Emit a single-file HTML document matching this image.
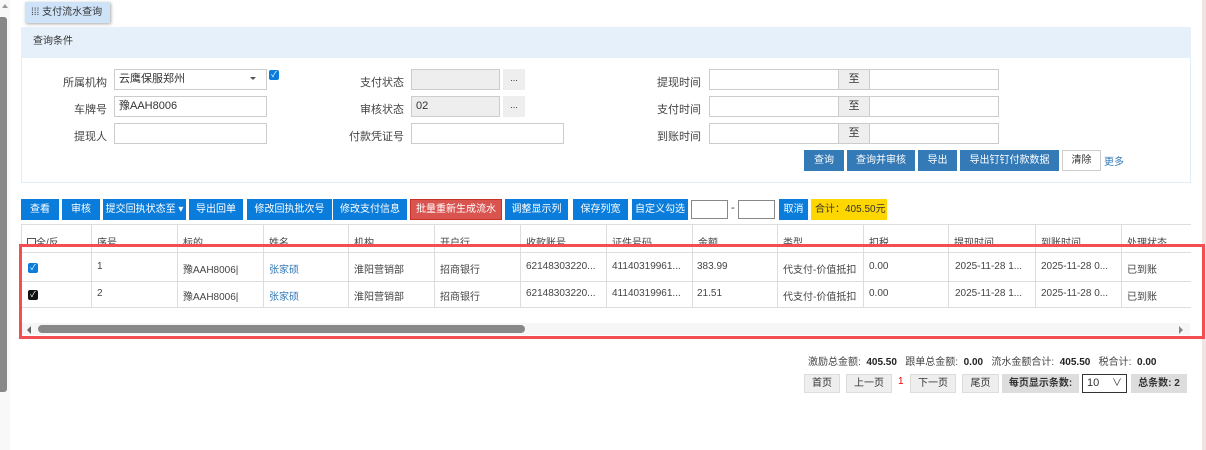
<!DOCTYPE html>
<html><head><meta charset="utf-8"><style>
*{box-sizing:border-box;margin:0;padding:0}
body{width:1206px;height:450px;overflow:hidden;background:#fff;font-family:"Liberation Sans","Noto Sans CJK SC",sans-serif;font-size:11px;color:#333;position:relative}
.a{position:absolute}
.lbl{position:absolute;text-align:right;font-size:11px;color:#444}
.inp{position:absolute;height:21px;border:1px solid #ccc;background:#fff;font-size:11px;padding:2px 4px;line-height:15px}
.dis{background:#eee}
.btn{position:absolute;top:199px;height:21px;background:#0a7ddc;color:#fff;font-size:10px;line-height:21px;text-align:center}
.qb{position:absolute;top:150px;height:21px;background:#337ab7;color:#fff;font-size:10px;line-height:21px;text-align:center}
.vl{position:absolute;top:224px;width:1px;height:84px;background:#ddd}
.hl{position:absolute;left:21px;width:1170px;height:1px;background:#ddd}
.c{position:absolute;font-size:10px;color:#444;white-space:nowrap}
.pb{position:absolute;top:374px;height:19px;background:#eee;border:1px solid #ddd;font-size:10px;line-height:17px;text-align:center;color:#333}
</style></head><body>
<div class="a" style="left:0;top:0;width:10px;height:450px;background:#f8f8f8"></div>
<div class="a" style="left:2px;top:4px;width:0;height:0;border-left:3px solid transparent;border-right:3px solid transparent;border-bottom:4px solid #999"></div>
<div class="a" style="left:0;top:17px;width:7px;height:375px;background:#888;border-radius:0 3px 3px 0"></div>
<div class="a" style="left:1202px;top:0;width:4px;height:450px;background:#f2e4e4"></div>

<div class="a" style="left:25px;top:2px;width:85px;height:21px;background:#cfe3f8;box-shadow:1px 1px 3px #aaa;font-size:10px;line-height:21px;padding-left:6px">&#8286;&#8286;&#8286; 支付流水查询</div>

<div class="a" style="left:21px;top:27px;width:1170px;height:156px;border:1px solid #e3edf7"></div>
<div class="a" style="left:21px;top:27px;width:1170px;height:31px;background:#e6f0fa;font-size:10px;line-height:30px;padding-left:12px">查询条件</div>

<div class="lbl" style="left:40px;top:74px;width:67px">所属机构</div>
<div class="inp" style="left:114px;top:69px;width:153px">云鹰保服郑州<span style="position:absolute;right:10px;top:7px;border-left:3px solid transparent;border-right:3px solid transparent;border-top:3px solid #555"></span></div>
<div class="a" style="left:269px;top:70px;width:10px;height:10px;background:#0a7ddc;border-radius:2px;color:#fff;font-size:8px;line-height:10px;text-align:center">✓</div>
<div class="lbl" style="left:40px;top:101px;width:67px">车牌号</div>
<div class="inp" style="left:114px;top:96px;width:153px">豫AAH8006</div>
<div class="lbl" style="left:40px;top:128px;width:67px">提现人</div>
<div class="inp" style="left:114px;top:123px;width:153px"></div>

<div class="lbl" style="left:330px;top:74px;width:74px">支付状态</div>
<div class="inp dis" style="left:411px;top:69px;width:89px"></div>
<div class="a" style="left:503px;top:69px;width:22px;height:21px;background:#eee;text-align:center;font-size:9px;line-height:19px">...</div>
<div class="lbl" style="left:330px;top:101px;width:74px">审核状态</div>
<div class="inp dis" style="left:411px;top:96px;width:89px">02</div>
<div class="a" style="left:503px;top:96px;width:22px;height:21px;background:#eee;text-align:center;font-size:9px;line-height:19px">...</div>
<div class="lbl" style="left:330px;top:128px;width:74px">付款凭证号</div>
<div class="inp" style="left:411px;top:123px;width:153px"></div>

<div class="lbl" style="left:630px;top:74px;width:71px">提现时间</div>
<div class="lbl" style="left:630px;top:101px;width:71px">支付时间</div>
<div class="lbl" style="left:630px;top:128px;width:71px">到账时间</div>
<div class="inp" style="left:709px;top:69px;width:130px"></div><div class="inp dis" style="left:838px;top:69px;width:32px;text-align:center">至</div><div class="inp" style="left:869px;top:69px;width:130px"></div>
<div class="inp" style="left:709px;top:96px;width:130px"></div><div class="inp dis" style="left:838px;top:96px;width:32px;text-align:center">至</div><div class="inp" style="left:869px;top:96px;width:130px"></div>
<div class="inp" style="left:709px;top:123px;width:130px"></div><div class="inp dis" style="left:838px;top:123px;width:32px;text-align:center">至</div><div class="inp" style="left:869px;top:123px;width:130px"></div>

<div class="qb" style="left:804px;width:40px">查询</div>
<div class="qb" style="left:847px;width:68px">查询并审核</div>
<div class="qb" style="left:918px;width:39px">导出</div>
<div class="qb" style="left:960px;width:99px">导出钉钉付款数据</div>
<div class="a" style="left:1062px;top:150px;width:39px;height:21px;border:1px solid #ccc;font-size:10px;line-height:19px;text-align:center">清除</div>
<div class="a" style="left:1104px;top:153px;font-size:10px;color:#337ab7">更多</div>

<div class="btn" style="left:21px;width:38px">查看</div>
<div class="btn" style="left:62px;width:38px">审核</div>
<div class="btn" style="left:103px;width:83px">提交回执状态至 ▾</div>
<div class="btn" style="left:189px;width:54px">导出回单</div>
<div class="btn" style="left:247px;width:85px">修改回执批次号</div>
<div class="btn" style="left:333px;width:74px">修改支付信息</div>
<div class="btn" style="left:410px;width:92px;background:#d9534f;border:1px solid #c9302c;line-height:19px">批量重新生成流水</div>
<div class="btn" style="left:505px;width:63px">调整显示列</div>
<div class="btn" style="left:573px;width:55px">保存列宽</div>
<div class="btn" style="left:632px;width:56px">自定义勾选</div>
<div class="inp" style="left:691px;top:200px;width:37px;height:19px;border-color:#888"></div>
<div class="a" style="left:731px;top:202px">-</div>
<div class="inp" style="left:738px;top:200px;width:37px;height:19px;border-color:#888"></div>
<div class="btn" style="left:779px;width:29px">取消</div>
<div class="a" style="left:811px;top:199px;width:76px;height:21px;background:#ffd700;font-size:10px;line-height:21px;padding-left:4px">合计：405.50元</div>

<div class="hl" style="top:224px"></div>
<div class="hl" style="top:252px"></div>
<div class="hl" style="top:281px"></div>
<div class="hl" style="top:307px"></div>
<div class="vl" style="left:21px"></div><div class="vl" style="left:91px"></div><div class="vl" style="left:177px"></div><div class="vl" style="left:263px"></div><div class="vl" style="left:348px"></div><div class="vl" style="left:434px"></div><div class="vl" style="left:520px"></div><div class="vl" style="left:606px"></div><div class="vl" style="left:692px"></div><div class="vl" style="left:777px"></div><div class="vl" style="left:863px"></div><div class="vl" style="left:948px"></div><div class="vl" style="left:1035px"></div><div class="vl" style="left:1121px"></div>

<div class="a" style="left:21px;top:225px;width:1170px;height:20px;overflow:hidden">
<div class="c" style="left:6px;top:9px"><span style="display:inline-block;width:9px;height:9px;border:1px solid #555;vertical-align:-1px"></span>全/反</div>
<div class="c" style="left:76px;top:9px">序号</div><div class="c" style="left:162px;top:9px">标的</div><div class="c" style="left:248px;top:9px">姓名</div><div class="c" style="left:333px;top:9px">机构</div><div class="c" style="left:419px;top:9px">开户行</div><div class="c" style="left:505px;top:9px">收款账号</div><div class="c" style="left:591px;top:9px">证件号码</div><div class="c" style="left:677px;top:9px">金额</div><div class="c" style="left:762px;top:9px">类型</div><div class="c" style="left:848px;top:9px">扣税</div><div class="c" style="left:933px;top:9px">提现时间</div><div class="c" style="left:1020px;top:9px">到账时间</div><div class="c" style="left:1106px;top:9px">处理状态</div>
</div>

<div class="a" style="left:28px;top:263px;width:10px;height:10px;background:#0a7ddc;border-radius:2px;color:#fff;font-size:8px;line-height:10px;text-align:center">✓</div>
<div class="a" style="left:28px;top:290px;width:10px;height:10px;background:#111;border-radius:2px;color:#fff;font-size:8px;line-height:10px;text-align:center">✓</div>
<div class="c" style="left:97px;top:261px">1</div><div class="c" style="left:183px;top:261px">豫AAH8006|</div><div class="c" style="left:269px;top:261px;color:#337ab7">张家硕</div><div class="c" style="left:354px;top:261px">淮阳营销部</div><div class="c" style="left:440px;top:261px">招商银行</div><div class="c" style="left:526px;top:261px">62148303220...</div><div class="c" style="left:612px;top:261px">41140319961...</div><div class="c" style="left:697px;top:261px">383.99</div><div class="c" style="left:783px;top:261px">代支付-价值抵扣</div><div class="c" style="left:869px;top:261px">0.00</div><div class="c" style="left:955px;top:261px">2025-11-28 1...</div><div class="c" style="left:1041px;top:261px">2025-11-28 0...</div><div class="c" style="left:1127px;top:261px">已到账</div>
<div class="c" style="left:97px;top:288px">2</div><div class="c" style="left:183px;top:288px">豫AAH8006|</div><div class="c" style="left:269px;top:288px;color:#337ab7">张家硕</div><div class="c" style="left:354px;top:288px">淮阳营销部</div><div class="c" style="left:440px;top:288px">招商银行</div><div class="c" style="left:526px;top:288px">62148303220...</div><div class="c" style="left:612px;top:288px">41140319961...</div><div class="c" style="left:697px;top:288px">21.51</div><div class="c" style="left:783px;top:288px">代支付-价值抵扣</div><div class="c" style="left:869px;top:288px">0.00</div><div class="c" style="left:955px;top:288px">2025-11-28 1...</div><div class="c" style="left:1041px;top:288px">2025-11-28 0...</div><div class="c" style="left:1127px;top:288px">已到账</div>

<div class="a" style="left:22px;top:323px;width:1168px;height:12px;background:#f6f6f6"></div>
<div class="a" style="left:27px;top:326px;border-top:4px solid transparent;border-bottom:4px solid transparent;border-right:4px solid #666"></div>
<div class="a" style="left:1179px;top:326px;border-top:4px solid transparent;border-bottom:4px solid transparent;border-left:4px solid #888"></div>
<div class="a" style="left:38px;top:325px;width:487px;height:8px;background:#888;border-radius:4px"></div>

<div class="a" style="left:19px;top:244px;width:1186px;height:95px;border:3px solid #f34e52"></div>

<div class="a" style="left:808px;top:353px;font-size:10px;color:#444;white-space:nowrap">激励总金额: &nbsp;<b style="color:#222">405.50</b> &nbsp; 跟单总金额: &nbsp;<b style="color:#222">0.00</b> &nbsp; 流水金额合计: &nbsp;<b style="color:#222">405.50</b> &nbsp; 税合计: &nbsp;<b style="color:#222">0.00</b></div>
<div class="pb" style="left:804px;width:36px">首页</div>
<div class="pb" style="left:846px;width:46px">上一页</div>
<div class="a" style="left:898px;top:376px;color:#e00;font-size:10px">1</div>
<div class="pb" style="left:910px;width:46px">下一页</div>
<div class="pb" style="left:962px;width:37px">尾页</div>
<div class="pb" style="left:1002px;width:77px;background:#ddd;border-color:#ddd;font-weight:bold">每页显示条数:</div>
<div class="a" style="left:1082px;top:374px;width:45px;height:19px;border:1px solid #333;font-size:11px;line-height:17px;padding-left:4px">10<span style="position:absolute;right:4px;top:0;font-size:10px">&#x2228;</span></div>
<div class="pb" style="left:1131px;width:56px;background:#ddd;border-color:#ddd;font-weight:bold">总条数: 2</div>
</body></html>
